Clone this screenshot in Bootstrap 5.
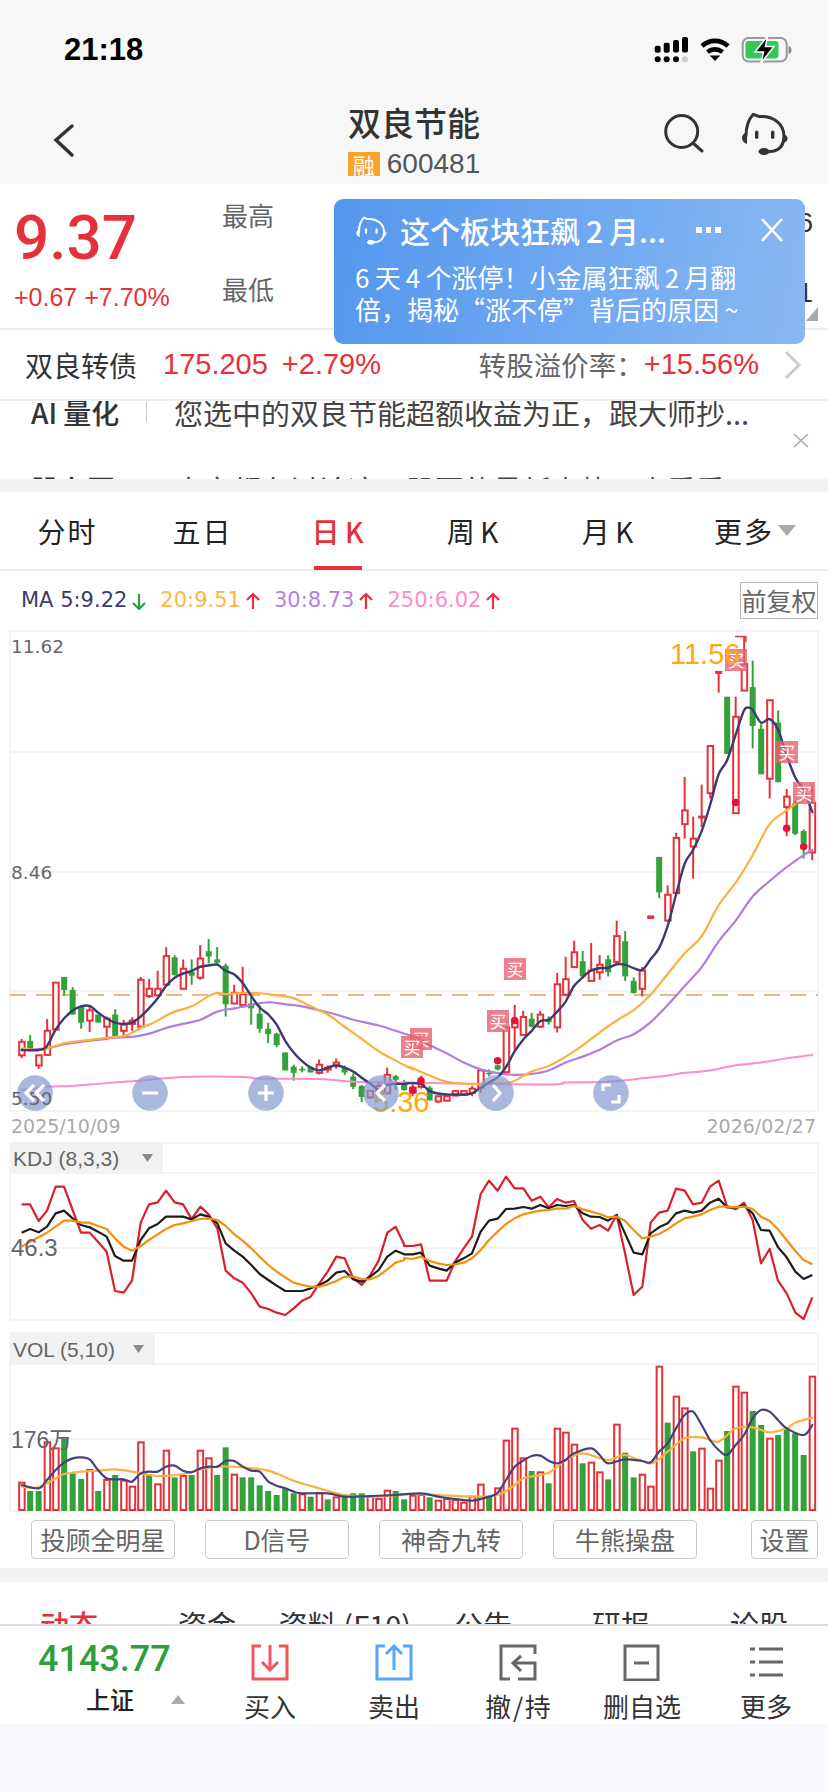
<!DOCTYPE html>
<html lang="zh">
<head>
<meta charset="utf-8">
<title>双良节能</title>
<link href="https://cdn.jsdelivr.net/npm/bootstrap@5.3.0/dist/css/bootstrap.min.css" rel="stylesheet">
<style>
:root{--up:#e5323a;--down:#33a23a}
body{width:828px;height:1792px;overflow:hidden;background:#f8f8fd;font-family:"Liberation Sans","Noto Sans CJK SC",sans-serif;color:#333}
.hdr{height:184px;background:#f7f7f7}
.stat{height:100px;padding:0 34px 0 64px}
.clock{font-size:31px;font-weight:700;color:#000}
.navcol{flex:1 1 0}
.chev{display:block;margin:22px 0 0 50px}
.hicons{display:block;margin-right:28px}
.title{font:500 33px/44px "Noto Sans CJK SC",sans-serif;color:#333}
.code{margin-top:5px;height:30px;font-size:28px;line-height:30px;color:#555}
.rong{width:32px;height:24px;background:#fba22b;color:#fff;font:22px/24px "Noto Sans CJK SC",sans-serif;margin-right:7px}
.quote{height:144px;background:#fff}
.bigp{font:500 62px/62px Roboto,sans-serif;color:var(--up);padding:23px 0 0 14px}
.chg{font-size:25px;line-height:30px;color:var(--up);margin:13px 0 0 14px;white-space:nowrap}
.lowhi{position:absolute;left:222px;top:11px;font:26px/40px "Noto Sans CJK SC",sans-serif;color:#666}
.lowhi div+div{margin-top:34px}
.edge{position:absolute;right:15px;top:19px;font-size:28px;line-height:40px;color:#333;text-align:right}
.edge div+div{margin-top:30px}
.pop{position:absolute;left:334px;top:15px;width:471px;height:145px;border-radius:9px;background:linear-gradient(100deg,#5397ee,#8ab8f3);color:#fff;padding:15px 21px 0 21px;z-index:5}
.poptl{height:32px;font:500 30px/32px "Noto Sans CJK SC",sans-serif}
.poptx{margin-top:15px;font:26px/32px "Noto Sans CJK SC",sans-serif;white-space:nowrap}
.dotsm{margin:0 40px 0 auto;width:25px;display:flex;gap:4px}
.dotsm i{width:6px;height:6px;background:#fff;display:block}
.bond{height:73px;background:#fff;border-top:2px solid #eee;border-bottom:2px solid #eee;padding:0 26px 0 25px;white-space:nowrap}
.bname{font:28px/1 "Noto Sans CJK SC",sans-serif;color:#333}
.bnum{font-size:29px;color:var(--up);margin-left:26px}
.bnum2{margin-left:14px}
.blbl{font:27.500px/1 "Noto Sans CJK SC",sans-serif;color:#666;margin-left:auto}
.bchev{margin-left:25px;flex:none}
.ai{height:78px;background:#fff;overflow:hidden;padding:0 0 0 31px;position:relative}
.airow{height:40px;margin-top:-9px;white-space:nowrap}
.airow2{margin-top:37px;height:40px;white-space:nowrap}
.aitag{font:500 28px/40px "Noto Sans CJK SC",sans-serif;color:#333;width:115px;white-space:nowrap}
.aidiv{width:1px;height:20px;background:#ccc;margin-right:27px}
.aitx{font:29px/40px "Noto Sans CJK SC",sans-serif;color:#444}
.aix{position:absolute;left:793px;top:32px}
.gapband{background:#f2f2f2}
.tabs{height:79px;background:#fff;border-bottom:2px solid #eee;font:28px/1 "Noto Sans CJK SC",sans-serif;letter-spacing:2px;color:#222}
.tabi{flex:0 0 135px;height:100%;display:flex;align-items:center;justify-content:center;position:relative}
.tabk{letter-spacing:0}
.tabon{color:var(--up);font-weight:500}
.tabon::after{content:"";position:absolute;left:44px;width:48px;height:4px;bottom:-1px;background:var(--up)}
.tabm{flex:0 0 153px;padding-left:39px;justify-content:flex-start}
.tri{display:inline-block;width:0;height:0;border-left:9px solid transparent;border-right:9px solid transparent;border-top:11px solid #aaa;margin-left:4px}
.marow{height:59px;background:#fff;font:21px/1 "DejaVu Sans",sans-serif;padding-left:21px;white-space:nowrap}
.maarr{margin:0 14px 0 5px}
.fq{margin-left:auto;margin-right:10px;height:37px;width:78px;border:1px solid #bbb;font:25px/35px "Noto Sans CJK SC",sans-serif;color:#666;text-align:center}
.chart{display:block;background:#fff}
.btnrow{height:48px;background:#fff;padding:0 10px 9px 31px;gap:30px}
.btnrow .btn{width:144px;height:39px;padding:0;font:25px/37px "Noto Sans CJK SC",sans-serif;color:#666;border:1px solid #ccc;border-radius:4px;background:#fff}
.btnrow .btn.setb{width:67px;margin-left:24px}
.tabs2{height:42px;background:#fff;overflow:hidden;font:29px/1 "Noto Sans CJK SC",sans-serif;color:#333;padding-top:28px}
.tabs2 div{flex:1 1 0;text-align:center;white-space:nowrap}
.foot{height:100px;background:#fff;border-top:2px solid #ddd}
.fl{flex:0 0 208px;position:relative}
.idx{font:500 36px/40px Roboto,sans-serif;color:#2e9e3a;margin:13px 0 0 38px}
.idn{font:500 24px/34px "Noto Sans CJK SC",sans-serif;color:#222;margin:3px 0 0 86px}
.idt{position:absolute;left:171px;top:69px;width:0;height:0;border-left:7px solid transparent;border-right:7px solid transparent;border-bottom:9px solid #aaa}
.fi{flex:0 0 124px;text-align:center;padding-top:18px}
.fi svg{display:block;margin:0 auto}
.fi span{display:block;font:26px/34px "Noto Sans CJK SC",sans-serif;color:#333;margin-top:8px;white-space:nowrap}
</style>
</head>
<body>
<header class="hdr">
  <div class="stat d-flex align-items-center justify-content-between">
    <span class="clock">21:18</span>
    <svg width="140" height="30" viewBox="654 35 140 30">
      <g fill="#000"><rect x="654.7" y="45.7" width="6" height="7" rx="2"/><rect x="663.7" y="42.7" width="6" height="10" rx="2"/><rect x="673" y="40" width="6" height="12.6" rx="2"/><rect x="682" y="37" width="6" height="15.6" rx="2"/><circle cx="657.7" cy="59.3" r="3"/><circle cx="666.7" cy="59.3" r="3"/><circle cx="676" cy="59.3" r="3"/><circle cx="685" cy="59.3" r="3" fill="#ccc"/></g>
      <g fill="none" stroke="#000" stroke-width="4.6"><path d="M702 46a19 19 0 0 1 26 0"/><path d="M707.5 52a12 12 0 0 1 15 0"/></g><path d="M709.8 55.5h10.4l-5.2 5.5z" fill="#000"/>
      <rect x="742.7" y="38" width="44" height="23.5" rx="6" fill="none" stroke="#999" stroke-width="2"/><path d="M788.5 46v8c2-.5 3-2 3-4s-1-3.500-3-4z" fill="#888"/><rect x="745.500" y="41" width="33" height="17.500" rx="3" fill="#34c759"/>
      <path d="M767.500 36 L755 52 h8.500 l-2.500 11 L774 46.500 h-8.500 z" fill="#000" stroke="#fff" stroke-width="1.500"/>
    </svg>
  </div>
  <div class="d-flex">
    <div class="navcol"><svg class="chev" width="30" height="36" viewBox="50 122 30 36"><path d="M72 126 L56 140 L72 155" fill="none" stroke="#333" stroke-width="3.500" stroke-linecap="round"/></svg></div>
    <div class="text-center">
      <div class="title">双良节能</div>
      <div class="code d-flex align-items-center"><span class="rong">融</span>600481</div>
    </div>
    <div class="navcol d-flex justify-content-end">
      <svg class="hicons" width="150" height="60" viewBox="650 106 150 60"><g fill="none" stroke="#333" color="#333"><circle cx="681.700" cy="137.500" r="16" stroke-width="3"/><path d="M694 150 L702 157" stroke-width="3" stroke-linecap="round"/><use href="#botp"/></g></svg>
    </div>
  </div>
  <svg width="0" height="0" class="position-absolute"><defs><g id="botp"><path d="M746 142 C746 132 749 125 753 120.500 C755 120 757 122.500 760 122.500 C773 121.500 784 130 784 142 C784 150 781 155 774 157 L766 158" fill="none" stroke-width="3" stroke-linecap="round"/><path d="M747 138v12c-3-1-5-3-5-6s2-5 5-6zM783 140v9c3-1 4.500-2 4.500-4.500s-1.500-3.500-4.500-4.500z" fill="currentColor" stroke="none"/><rect x="755" y="136.500" width="3.400" height="8.500" rx="1.700" fill="currentColor" stroke="none"/><rect x="771" y="136.500" width="3.400" height="8.500" rx="1.700" fill="currentColor" stroke="none"/><ellipse cx="764" cy="157.500" rx="5.500" ry="3.500" fill="currentColor" stroke="none"/></g></defs></svg>
</header>

<section class="quote position-relative">
  <div class="bigp">9.37</div>
  <div class="chg">+0.67 +7.70%</div>
  <div class="lowhi"><div>最高</div><div>最低</div></div>
  <div class="edge"><div>6</div><div>1</div></div>
  <svg class="position-absolute" style="left:806px;top:123px" width="12" height="14"><path d="M12 0V14H0z" fill="#aaa"/></svg>
  <aside class="pop">
    <div class="poptl d-flex align-items-center">
      <svg width="33" height="32" viewBox="740 115 50 48" color="#fff" stroke="#fff" style="margin-right:12px;flex:none"><use href="#botp"/></svg>
      <span>这个板块狂飙&#8201;2&#8201;月...</span>
      <span class="dotsm"><i></i><i></i><i></i></span>
      <svg width="22" height="24" viewBox="0 0 22 24" style="flex:none;margin-right:1px"><path d="M1 1L21 23M21 1L1 23" stroke="#fff" stroke-width="2.600"/></svg>
    </div>
    <div class="poptx">6&#8201;天&#8201;4&#8201;个涨停！小金属狂飙&#8201;2&#8201;月翻<br>倍，揭秘“涨不停”背后的原因&#8201;~</div>
  </aside>
</section>

<section class="bond d-flex align-items-center">
  <span class="bname">双良转债</span><span class="bnum">175.205</span><span class="bnum bnum2">+2.79%</span>
  <span class="blbl">转股溢价率：</span><span class="bnum ms-0">+15.56%</span>
  <svg class="bchev" width="18" height="30" viewBox="0 0 18 30"><path d="M2 2 L15 15 L2 28" fill="none" stroke="#ccc" stroke-width="3"/></svg>
</section>

<section class="ai">
  <div class="airow d-flex align-items-center"><span class="aitag">AI 量化</span><span class="aidiv"></span><span class="aitx">您选中的双良节能超额收益为正，跟大师抄...</span></div>
  <svg class="aix" width="16" height="15" viewBox="0 0 16 15"><path d="M1 1L15 14M15 1L1 14" stroke="#aaa" stroke-width="1.600"/></svg>
  <div class="airow2 d-flex align-items-center"><span class="aitag">股东圈</span><span class="aidiv"></span><span class="aitx">大家都在讨论这只股票的最新走势，来看看</span></div>
</section>
<div class="gapband" style="height:13px"></div>

<nav class="tabs d-flex">
  <div class="tabi">分时</div><div class="tabi">五日</div><div class="tabi tabon tabk">日&#8201;K</div><div class="tabi tabk">周&#8201;K</div><div class="tabi tabk">月&#8201;K</div><div class="tabi tabm">更多<span class="tri"></span></div>
</nav>
<div class="marow d-flex align-items-center">
  <span style="color:#3d3a6e">MA 5:9.22</span><svg class="maarr" width="14" height="18" viewBox="0 0 14 18"><path d="M7 17V2M1 11l6 6 6-6" fill="none" stroke="#2e9e3a" stroke-width="2.200"/></svg>
  <span style="color:#fbb843">20:9.51</span><svg class="maarr" width="14" height="18" viewBox="0 0 14 18"><path d="M7 17V2M1 8l6-6 6 6" fill="none" stroke="#e5323a" stroke-width="2.200"/></svg>
  <span style="color:#b681e3">30:8.73</span><svg class="maarr" width="14" height="18" viewBox="0 0 14 18"><path d="M7 17V2M1 8l6-6 6 6" fill="none" stroke="#e5323a" stroke-width="2.200"/></svg>
  <span style="color:#ff8cc8">250:6.02</span><svg class="maarr" width="14" height="18" viewBox="0 0 14 18"><path d="M7 17V2M1 8l6-6 6 6" fill="none" stroke="#e5323a" stroke-width="2.200"/></svg>
  <div class="fq">前复权</div>
</div>

<svg id="chart" class="chart" width="828" height="890" viewBox="0 630 828 890"></svg>

<div class="btnrow d-flex align-items-end">
  <button class="btn">投顾全明星</button><button class="btn">D信号</button><button class="btn">神奇九转</button><button class="btn">牛熊操盘</button><button class="btn setb">设置</button>
</div>
<div class="gapband" style="height:14px"></div>
<nav class="tabs2 d-flex">
  <div style="color:#e5323a;font-weight:500">动态</div><div>资金</div><div>资料 (F10)</div><div>公告</div><div>研报</div><div>论股</div>
</nav>
<footer class="foot d-flex">
  <div class="fl"><div class="idx">4143.77</div><div class="idn">上证</div><span class="idt"></span></div>
  <div class="fi"><svg width="38" height="37" viewBox="0 0 38 37"><g fill="none" stroke="#f0565c" stroke-width="3"><path d="M10 2H2V35H36V2H28"/><path d="M19 1V26M11 18l8 8 8-8"/></g></svg><span>买入</span></div>
  <div class="fi"><svg width="38" height="37" viewBox="0 0 38 37"><g fill="none" stroke="#58a5fb" stroke-width="3"><path d="M10 2H2V35H36V2H28"/><path d="M19 26V2M11 10l8-8 8 8"/></g></svg><span>卖出</span></div>
  <div class="fi"><svg width="38" height="37" viewBox="0 0 38 37"><g fill="none" stroke="#666" stroke-width="3"><path d="M36 10V2H2V35H11"/><path d="M19 35H36V19H14"/><path d="M22 12l-8 7 8 8"/></g></svg><span>撤&#8202;/&#8202;持</span></div>
  <div class="fi"><svg width="38" height="37" viewBox="0 0 38 37"><g fill="none" stroke="#666" stroke-width="3"><rect x="2" y="2" width="33" height="34"/><path d="M11 19H26"/></g></svg><span>删自选</span></div>
  <div class="fi"><svg width="38" height="37" viewBox="0 0 38 37"><g fill="none" stroke="#666" stroke-width="3"><path d="M3 5H8M12 5H36M3 18H8M12 18H36M3 31H8M12 31H36"/></g></svg><span>更多</span></div>
</footer>

<script src="https://cdn.jsdelivr.net/npm/bootstrap@5.3.0/dist/js/bootstrap.bundle.min.js"></script>
<script>
(function(){
var R='#e5323a',G='#33a23a',X=function(i){return 21.67+8.5*i;};
var z2=function(y){return 490+y/2.45;},z3=function(y){return 590+y/2.9037;},z4=function(y){return 1120+y/3;};
var s='';
function ln(x1,y1,x2,y2,c,w,extra){s+='<line x1="'+x1+'" y1="'+y1+'" x2="'+x2+'" y2="'+y2+'" stroke="'+c+'" stroke-width="'+(w||1.500)+'" '+(extra||'')+'/>';}
function tx(x,y,t,c,fs,fam,anc){s+='<text x="'+x+'" y="'+y+'" fill="'+c+'" font-size="'+fs+'" font-family="'+(fam||'DejaVu Sans')+',sans-serif" text-anchor="'+(anc||'start')+'">'+t+'</text>';}
// frames and grid
[631,752,872,991,1111,1143,1173,1248,1320,1333,1364,1439].forEach(function(y){ln(10,y,818,y,'#f0f0f0',1.500);});
ln(10,630,10,1111,'#f0f0f0',1.500);ln(818,630,818,1111,'#f0f0f0',1.500);
ln(10,1143,10,1320,'#f0f0f0',1.500);ln(818,1143,818,1320,'#f0f0f0',1.500);
ln(10,1333,10,1511,'#f0f0f0',1.500);ln(818,1333,818,1511,'#f0f0f0',1.500);ln(10,1511,818,1511,'#f0f0f0',1.500);
ln(10,995,818,995,'#fbb27a',2,'stroke-dasharray="16 10"');
// candles: type,wickTop,bodyTop,bodyBot,wickBot
var c1=[['r',1345,1352,1385,1392],['g',1335,1350,1368,1375],['r',1385,1385,1410,1418],['r',1296,1325,1384,1385],['r',1207,1207,1322,1322],['g',1193,1193,1225,1238],['g',1218,1225,1285,1285],['g',1262,1265,1305,1320],['r',1262,1275,1300,1328],['g',1285,1285,1305,1305],['r',1290,1295,1315,1348],['g',1272,1285,1338,1340],['r',1298,1310,1325,1335],['r',1292,1300,1308,1325],['r',1193,1200,1315,1315],['r',1198,1222,1240,1245],['r',1178,1222,1238,1240],['r',1120,1142,1212,1215],['g',1140,1145,1188,1190],['r',1150,1173,1222,1222],['g',1150,1180,1190,1212],['r',1115,1148,1195,1200],['g',1100,1130,1143,1160],['g',1120,1150,1158,1165],['g',1160,1165,1260,1290],['r',1212,1232,1258,1260],['r',1168,1235,1262,1262],['g',1235,1258,1270,1310],['g',1262,1283,1320,1330],['g',1305,1320,1333,1355],['g',1330,1332,1360,1365],['g',1378,1378,1422,1422],['g',1408,1413,1428,1447],['g',1412,1418,1422,1427],['g',1413,1413,1427,1427],['r',1395,1408,1428,1432],['r',1410,1416,1420,1428],['r',1393,1403,1410,1418],['g',1410,1415,1427,1433],['g',1430,1437,1462,1468],['g',1458,1460,1487,1500],['r',1470,1472,1488,1492],['r',1450,1460,1478,1480],['r',1415,1433,1478,1480],['g',1433,1436,1445,1470],['g',1445,1452,1470,1472]];
var c2=[['r',1435,1445,1460,1470],['r',1410,1433,1443,1448],['g',1440,1445,1482,1482],['r',1470,1470,1485,1490],['r',1470,1470,1483,1483],['r',1455,1455,1468,1468],['r',1455,1455,1466,1466],['r',1440,1448,1460,1470],['r',1395,1395,1445,1460],['g',1392,1402,1406,1412],['g',1380,1380,1392,1395],['r',1270,1270,1400,1400],['r',1205,1255,1270,1335],['r',1222,1240,1292,1295],['g',1228,1245,1268,1270],['r',1222,1233,1268,1272],['g',1238,1245,1255,1262],['r',1112,1145,1270,1285],['r',1065,1130,1175,1180],['r',1018,1052,1095,1095],['g',1048,1078,1122,1128],['r',1025,1105,1135,1135],['r',1060,1088,1110,1132],['g',1060,1072,1110,1122],['r',960,1005,1080,1090],['g',990,1020,1122,1135],['g',1125,1135,1170,1172],['r',1095,1105,1158,1180],['d',950,945,955,950],['g',775,775,878,895],['r',858,885,960,962],['r',705,720,880,880],['r',543,640,680,722],['r',658,722,745,838],['f',565,655,665,688],['r',453,453,590,605],['f',235,235,238,298],['g',310,310,476,476],['r',310,368,648,648],['r',135,215,292,292],['g',205,282,395,460],['g',390,403,535,535],['r',320,320,548,605],['g',350,385,558,558],['r',578,600,630,715],['g',610,620,708,712],['g',695,700,735,780],['r',570,618,762,785]];
function cand(i,c,f){var x=X(i),col=(c[0]=='g')?G:R;
 if(c[0]=='d'){s+='<rect x="'+(x-3.500)+'" y="'+f(945)+'" width="7" height="3.500" fill="'+R+'"/>';return;}
 if(c[0]=='f'){ln(x,f(c[1]),x,f(c[4]),R,2);s+='<rect x="'+(x-3.500)+'" y="'+f(c[2])+'" width="7" height="3" fill="'+R+'"/>';return;}
 ln(x,f(c[1]),x,f(c[4]),col,2);
 if(c[0]=='g')s+='<rect x="'+(x-3)+'" y="'+f(c[2])+'" width="6" height="'+(f(c[3])-f(c[2]))+'" fill="'+G+'"/>';
 else s+='<rect x="'+(x-2.500)+'" y="'+f(c[2])+'" width="5.500" height="'+(f(c[3])-f(c[2]))+'" fill="#fff" stroke="'+R+'" stroke-width="2"/>';}
c1.forEach(function(c,i){cand(i,c,z2);});c2.forEach(function(c,i){cand(i+46,c,z3);});
// smooth lines
function P(a,fx,fy){var r=[];for(var i=0;i<a.length;i+=2)r.push([fx(a[i]),fy(a[i+1])]);return r;}
var xa=function(v){return v/3;},xb=function(v){return 410+v/3;};
function smooth(p,c,w,op){var d='M'+p[0][0]+' '+p[0][1];for(var i=0;i<p.length-1;i++){var a=p[Math.max(i-1,0)],b=p[i],e=p[i+1],g=p[Math.min(i+2,p.length-1)];d+=' C'+(b[0]+(e[0]-a[0])/6)+' '+(b[1]+(e[1]-a[1])/6)+' '+(e[0]-(g[0]-b[0])/6)+' '+(e[1]-(g[1]-b[1])/6)+' '+e[0]+' '+e[1];}s+='<path d="'+d+'" fill="none" stroke="'+c+'" stroke-width="'+w+'" '+(op?'opacity="'+op+'"':'')+' stroke-linecap="round" stroke-linejoin="round"/>';}
function poly(p,c,w){s+='<polyline points="'+p.map(function(q){return q.join(',');}).join(' ')+'" fill="none" stroke="'+c+'" stroke-width="'+w+'" stroke-linejoin="round"/>';}
var m=function(a,b){return P(a,xa,z2).concat(P(b,xb,z3));};
smooth(m([65,1470,141,1462,218,1460,294,1455,371,1450,447,1445,549,1438,728,1438,779,1442,958,1443,1060,1450,1190,1452],[0,1430,110,1432,263,1435,441,1435,467,1430,594,1428,697,1418,773,1410,824,1402,900,1395,977,1380,1053,1372,1130,1360,1207,1350]),'#ff8ccb',2);
smooth(m([65,1372,141,1368,192,1358,243,1352,294,1347,345,1342,396,1340,447,1332,498,1318,549,1308,601,1298,652,1278,703,1270,754,1262,805,1255,856,1260,907,1265,958,1275,1009,1285,1060,1298,1136,1312,1187,1325,1260,1345],[60,1322,110,1345,161,1372,212,1392,263,1403,314,1408,365,1405,416,1395,467,1372,518,1355,569,1335,620,1308,671,1290,722,1255,773,1205,824,1150,875,1095,926,1020,977,960,1028,890,1079,845,1130,805,1181,770,1207,755]),'#b07de0',2.200);
smooth(m([65,1368,116,1372,141,1368,167,1362,192,1355,218,1352,269,1347,320,1342,371,1338,396,1330,422,1318,447,1310,473,1300,498,1288,524,1278,575,1265,626,1240,652,1232,677,1235,728,1232,779,1233,830,1238,881,1245,932,1265,983,1285,1034,1315,1085,1345,1136,1375,1187,1398,1240,1420],[0,1385,59,1410,110,1428,186,1435,237,1432,288,1432,314,1425,365,1398,416,1382,467,1355,518,1322,569,1285,620,1250,671,1220,722,1175,773,1115,824,1055,875,1005,926,915,977,850,1028,770,1079,680,1130,640,1181,605]),'#fbb040',2.200);
smooth(m([65,1372,116,1372,141,1362,167,1322,192,1295,218,1275,243,1265,269,1264,294,1280,320,1295,345,1305,371,1308,396,1305,422,1290,447,1270,473,1245,498,1215,524,1195,549,1185,575,1178,601,1168,626,1165,652,1163,677,1178,703,1187,728,1208,754,1240,779,1268,805,1285,830,1310,856,1350,881,1378,907,1400,932,1415,958,1422,983,1415,1009,1410,1034,1415,1060,1425,1085,1440,1111,1455,1136,1468,1162,1458,1187,1455,1213,1455],[0,1432,33,1435,59,1455,84,1462,110,1465,135,1465,161,1465,186,1462,212,1445,237,1430,263,1415,288,1385,314,1340,340,1305,365,1280,391,1252,416,1248,441,1225,467,1195,492,1150,518,1125,543,1105,569,1098,594,1097,620,1087,645,1088,671,1098,697,1103,722,1072,747,1040,773,975,798,885,824,795,849,755,875,700,900,625,926,535,951,495,977,420,1002,350,1018,342,1028,348,1053,385,1079,375,1104,405,1130,480,1156,545,1181,580,1207,645]),'#3d3a6e',2.400);
// dots
[[8,1452],[33,1425],[263,1367],[314,1250],[977,617],[1130,692],[1181,745]].forEach(function(d){s+='<circle cx="'+xb(d[0])+'" cy="'+z3(d[1])+'" r="3.800" fill="#e2133c"/>';});
// buy tags
[[504,958],[487,1010],[410,1028],[401,1036],[725,649],[776,741],[793,782]].forEach(function(t){s+='<rect x="'+t[0]+'" y="'+t[1]+'" width="22" height="22" fill="#e9606f" opacity=".8"/>';tx(t[0]+11,t[1]+17.500,'买','#fff',17,'Noto Sans CJK SC','middle');});
// axis labels
tx(11,653,'11.62','#666',18.500);tx(11,879,'8.46','#666',18.500);
tx(11,1133,'2025/10/09','#aaa',19);tx(816,1133,'2026/02/27','#aaa',19,null,'end');
tx(670,664,'11.56','#ffa80f',29,'Liberation Sans');ln(735,636.500,746,636.500,R,1.500);ln(746,636.500,746,642,R,1.500);
tx(373,1112,'5.36','#ffa80f',29,'Liberation Sans');
// nav circles
[35,150,266,381,496,611].forEach(function(x){s+='<circle cx="'+x+'" cy="1093" r="17.800" fill="#7f97cf" opacity=".68"/>';});
tx(11,1105,'5.50','#666',18.500);
var W='fill="none" stroke="#fff" stroke-width="3.200"';
s+='<path d="M34 1085l-8 8 8 8M44 1085l-8 8 8 8" '+W+'/>';
s+='<path d="M142 1093H158" '+W+'/>';
s+='<path d="M258 1093H274M266 1085V1101" '+W+'/>';
s+='<path d="M385 1085l-8 8 8 8" '+W+'/>';
s+='<path d="M493 1085l7 8-7 8" '+W+'/>';
s+='<path d="M603 1091V1085H611M619 1095V1102H611" '+W+' stroke-linejoin="miter"/>';
// KDJ
s+='<rect x="10" y="1143" width="153" height="30" fill="#f2f2f2"/>';
tx(13,1166,'KDJ (8,3,3)','#666',21,'Liberation Sans');s+='<path d="M142 1154h11l-5.500 8z" fill="#888"/>';
var J=[65,253,90,253,116,303,141,272,167,200,192,200,218,270,243,338,269,338,294,365,320,395,345,513,371,518,396,482,422,308,447,253,473,247,498,212,524,247,549,253,575,297,601,260,626,283,652,325,677,452,703,475,728,488,754,520,779,560,805,567,830,578,856,585,881,565,907,542,932,530,958,490,983,455,1009,410,1034,415,1060,475,1085,495,1111,465,1136,422,1162,338,1187,320,1213,375],
J2=[-18,378,8,378,33,373,59,482,84,482,110,482,135,425,161,385,186,350,212,222,237,182,263,212,288,170,314,205,340,205,365,242,391,230,416,262,441,237,467,248,492,243,518,300,543,326,569,315,594,332,620,285,645,400,671,525,697,500,722,308,747,278,773,272,798,206,824,212,849,253,875,248,900,200,926,182,951,258,977,268,1002,248,1028,300,1053,430,1079,387,1104,482,1130,520,1156,578,1181,597,1207,532],
K=[65,338,90,327,116,337,141,320,167,280,192,272,218,295,243,315,269,322,294,335,320,350,345,408,371,422,396,422,422,360,447,325,473,312,498,290,524,290,549,290,575,298,601,283,626,290,652,310,677,370,703,392,728,410,754,435,779,462,805,480,830,497,856,513,881,513,907,513,932,505,958,495,983,482,1009,458,1034,453,1060,478,1085,485,1111,470,1136,450,1162,410,1187,392,1213,403],
K2=[-18,403,8,403,33,398,59,437,84,445,110,452,135,428,161,415,186,400,212,335,237,302,263,296,288,267,314,266,340,261,365,266,391,255,416,265,441,255,467,258,492,255,518,280,543,290,569,291,594,302,620,285,645,340,671,398,697,403,722,340,747,322,773,310,798,280,824,272,849,278,875,272,900,248,926,236,951,262,977,263,1002,256,1028,280,1053,330,1079,332,1104,382,1130,412,1156,455,1181,477,1207,465],
D=[65,380,90,365,116,352,141,338,167,320,192,302,218,302,243,308,269,308,294,318,320,327,345,355,371,380,396,392,422,378,447,360,473,343,498,327,524,315,549,310,575,303,601,297,626,295,652,300,677,318,703,343,728,362,754,385,779,410,805,435,830,455,856,472,881,488,907,495,932,500,958,500,983,493,1009,483,1034,470,1060,470,1085,477,1111,478,1136,468,1162,448,1187,428,1213,420],
D2=[-18,414,8,417,33,410,59,423,84,430,110,435,135,433,161,428,186,415,212,390,237,360,263,335,288,312,314,295,340,283,365,277,391,272,416,270,441,266,467,265,492,258,518,268,543,275,569,282,594,292,620,290,645,302,671,330,697,355,722,350,747,342,773,328,798,310,824,295,849,290,875,283,900,270,926,260,951,260,977,262,1002,260,1028,267,1053,290,1079,303,1104,328,1130,360,1156,393,1181,420,1207,433];
poly(P(J,xa,z4).concat(P(J2,xb,z4)),'#d9202c',2.200);
poly(P(K,xa,z4).concat(P(K2,xb,z4)),'#1d1d1d',2.200);
poly(P(D,xa,z4).concat(P(D2,xb,z4)),'#f5900f',2.200);
tx(11,1256,'46.3','#666',24,'Liberation Sans');
// VOL
s+='<rect x="10" y="1334" width="145" height="30" fill="#f2f2f2"/>';
tx(13,1357,'VOL (5,10)','#666',21,'Liberation Sans');s+='<path d="M133 1345h11l-5.500 8z" fill="#888"/>';
var v=[['r',1088],['g',1113],['g',1113],['r',967],['r',985],['g',955],['g',1060],['g',1077],['r',1050],['g',1113],['r',1080],['g',1065],['r',1082],['r',1100],['r',967],['g',1062],['r',1093],['r',992],['g',1072],['r',1068],['g',1065],['r',992],['r',1015],['g',1065],['g',982],['r',1064],['g',1072],['g',1072],['g',1096],['g',1113],['g',1125],['g',1107],['g',1120],['r',1123],['g',1130],['r',1120],['g',1138],['r',1132],['g',1130],['g',1120],['g',1120],['r',1130],['r',1137],['r',1112],['g',1113],['g',1138],['r',1127],['r',1125],['g',1132],['r',1142],['r',1137],['r',1140],['r',1148],['r',1130],['r',1094],['g',1128],['r',1105],['r',962],['r',926],['r',1015],['g',1053],['r',1057],['g',1090],['r',926],['r',938],['r',974],['g',1030],['r',1028],['r',1057],['g',1078],['r',914],['g',998],['g',1072],['r',1064],['r',1100],['r',740],['g',908],['r',830],['r',865],['g',994],['r',986],['r',1106],['r',1022],['g',933],['r',800],['r',818],['g',873],['g',915],['r',956],['g',945],['g',925],['g',940],['g',1005],['r',770]];
v.forEach(function(b,i){var x=X(i),y=z4(b[1]),h=1511-y;if(b[0]=='g')s+='<rect x="'+(x-3)+'" y="'+y+'" width="6" height="'+h+'" fill="'+G+'"/>';else s+='<rect x="'+(x-2.500)+'" y="'+y+'" width="5.500" height="'+(h-1)+'" fill="#fff" stroke="'+R+'" stroke-width="2"/>';});
smooth(P([65,1100,116,1102,167,1075,192,1062,243,1055,294,1052,345,1048,396,1055,473,1068,549,1062,601,1048,652,1040,728,1042,805,1052,881,1082,958,1105,1034,1125,1136,1130,1230,1122],xa,z4).concat(P([84,1125,186,1130,263,1125,314,1095,340,1075,416,1058,467,1020,518,1000,594,1020,645,1005,722,1030,773,995,824,955,875,952,926,965,977,925,1028,922,1079,937,1130,925,1156,908,1207,893],xb,z4)),'#fbb040',2.200);
smooth(P([65,1095,116,1105,141,1080,167,1050,192,1028,218,1015,243,1012,269,1018,294,1050,320,1075,345,1078,371,1078,396,1085,422,1060,447,1055,473,1055,498,1040,524,1037,549,1052,575,1057,601,1045,626,1040,652,1040,677,1023,703,1023,728,1040,754,1052,779,1055,805,1085,830,1097,856,1105,881,1115,907,1120,983,1120,1034,1130,1111,1128,1187,1125],xa,z4).concat(P([33,1120,84,1130,135,1137,186,1142,237,1130,263,1118,288,1080,314,1040,340,1022,365,1008,391,1007,416,1022,441,1030,467,1020,492,1000,543,985,569,1005,594,1030,645,1018,697,1023,722,1027,747,995,773,970,798,925,824,885,849,875,875,915,900,960,926,990,951,1005,977,975,1002,945,1028,895,1053,870,1079,875,1104,900,1130,925,1181,945,1207,915],xb,z4)),'#45417a',2.200);
tx(11,1448,'176万','#666',23,'Liberation Sans, Noto Sans CJK SC');
document.getElementById('chart').innerHTML=s;
})();
</script>
</body>
</html>
